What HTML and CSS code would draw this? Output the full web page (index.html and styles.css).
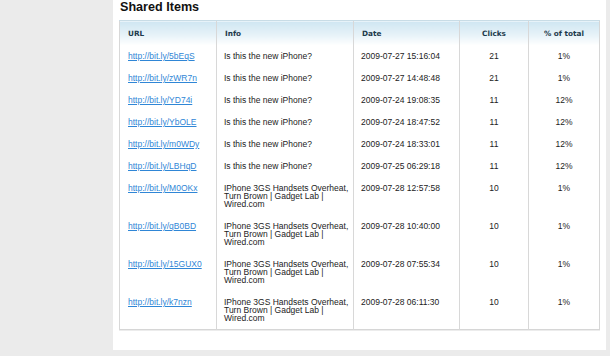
FILE: index.html
```html
<!DOCTYPE html>
<html>
<head>
<meta charset="utf-8">
<link rel="stylesheet" href="styles.css">
</head>
<body>
<div class="panel">
  <h2 class="title">Shared Items</h2>
  <table class="items">
    <colgroup>
      <col class="c-url"><col class="c-info"><col class="c-date"><col class="c-clicks"><col class="c-pct">
    </colgroup>
    <thead>
      <tr><th>URL</th><th>Info</th><th>Date</th><th class="num">Clicks</th><th class="num">% of total</th></tr>
    </thead>
    <tbody>
      <tr><td><a href="#">http://bit.ly/5bEqS</a></td><td>Is this the new iPhone?</td><td>2009-07-27 15:16:04</td><td class="num">21</td><td class="num">1%</td></tr>
      <tr><td><a href="#">http://bit.ly/zWR7n</a></td><td>Is this the new iPhone?</td><td>2009-07-27 14:48:48</td><td class="num">21</td><td class="num">1%</td></tr>
      <tr><td><a href="#">http://bit.ly/YD74i</a></td><td>Is this the new iPhone?</td><td>2009-07-24 19:08:35</td><td class="num">11</td><td class="num">12%</td></tr>
      <tr><td><a href="#">http://bit.ly/YbOLE</a></td><td>Is this the new iPhone?</td><td>2009-07-24 18:47:52</td><td class="num">11</td><td class="num">12%</td></tr>
      <tr><td><a href="#">http://bit.ly/m0WDy</a></td><td>Is this the new iPhone?</td><td>2009-07-24 18:33:01</td><td class="num">11</td><td class="num">12%</td></tr>
      <tr><td><a href="#">http://bit.ly/LBHqD</a></td><td>Is this the new iPhone?</td><td>2009-07-25 06:29:18</td><td class="num">11</td><td class="num">12%</td></tr>
      <tr><td><a href="#">http://bit.ly/M0OKx</a></td><td>IPhone 3GS Handsets Overheat, Turn Brown | Gadget Lab | Wired.com</td><td>2009-07-28 12:57:58</td><td class="num">10</td><td class="num">1%</td></tr>
      <tr><td><a href="#">http://bit.ly/qB0BD</a></td><td>IPhone 3GS Handsets Overheat, Turn Brown | Gadget Lab | Wired.com</td><td>2009-07-28 10:40:00</td><td class="num">10</td><td class="num">1%</td></tr>
      <tr><td><a href="#">http://bit.ly/15GUX0</a></td><td>IPhone 3GS Handsets Overheat, Turn Brown | Gadget Lab | Wired.com</td><td>2009-07-28 07:55:34</td><td class="num">10</td><td class="num">1%</td></tr>
      <tr><td><a href="#">http://bit.ly/k7nzn</a></td><td>IPhone 3GS Handsets Overheat, Turn Brown | Gadget Lab | Wired.com</td><td>2009-07-28 06:11:30</td><td class="num">10</td><td class="num">1%</td></tr>
    </tbody>
  </table>
</div>
</body>
</html>
```
FILE: styles.css
```css
html, body {
  margin: 0;
  padding: 0;
  background: #ebebeb;
}
body {
  font-family: "Liberation Sans", Arial, sans-serif;
  color: #222;
}
.panel {
  margin-left: 113px;
  width: 493px;
  height: 350px;
  background: #fff;
  box-sizing: border-box;
  padding: 0 0 0 6px;
}
.title {
  margin: 0;
  padding: 0 0 0 1px;
  font-size: 12.6px;
  line-height: 15px;
  font-weight: bold;
  color: #111;
}
.items {
  margin-top: 5px;
  width: 480px;
  border-collapse: collapse;
  table-layout: fixed;
  border: 1px solid #d6d6d6;
  box-shadow: 0 1px 0 #ececec;
}
.c-url { width: 97px; }
.c-info { width: 137px; }
.c-date { width: 106px; }
.c-clicks { width: 69px; }
.c-pct { width: 71px; }
.items th {
  font-family: "DejaVu Sans", Verdana, sans-serif;
  font-size: 7.3px;
  font-weight: bold;
  color: #1d3a4c;
  text-align: left;
  line-height: 8px;
  padding: 9px 2px 7px 8px;
  background: linear-gradient(to bottom, #cfe6f2 0%, #e6f2f8 55%, #ffffff 100%);
  border-left: 1px solid #d8d8d8;
  border-top: 1px solid #c8dce6;
}
.items td {
  font-size: 8.5px;
  line-height: 8px;
  padding: 7px 1px 7px 7px;
  vertical-align: top;
  border-left: 1px solid #d8d8d8;
}
.items td:first-child { padding-left: 8px; }
.items th.num, .items td.num { text-align: center; padding-left: 4px; padding-right: 4px; }
.items a {
  color: #2f86d6;
  text-decoration: underline;
}
```
